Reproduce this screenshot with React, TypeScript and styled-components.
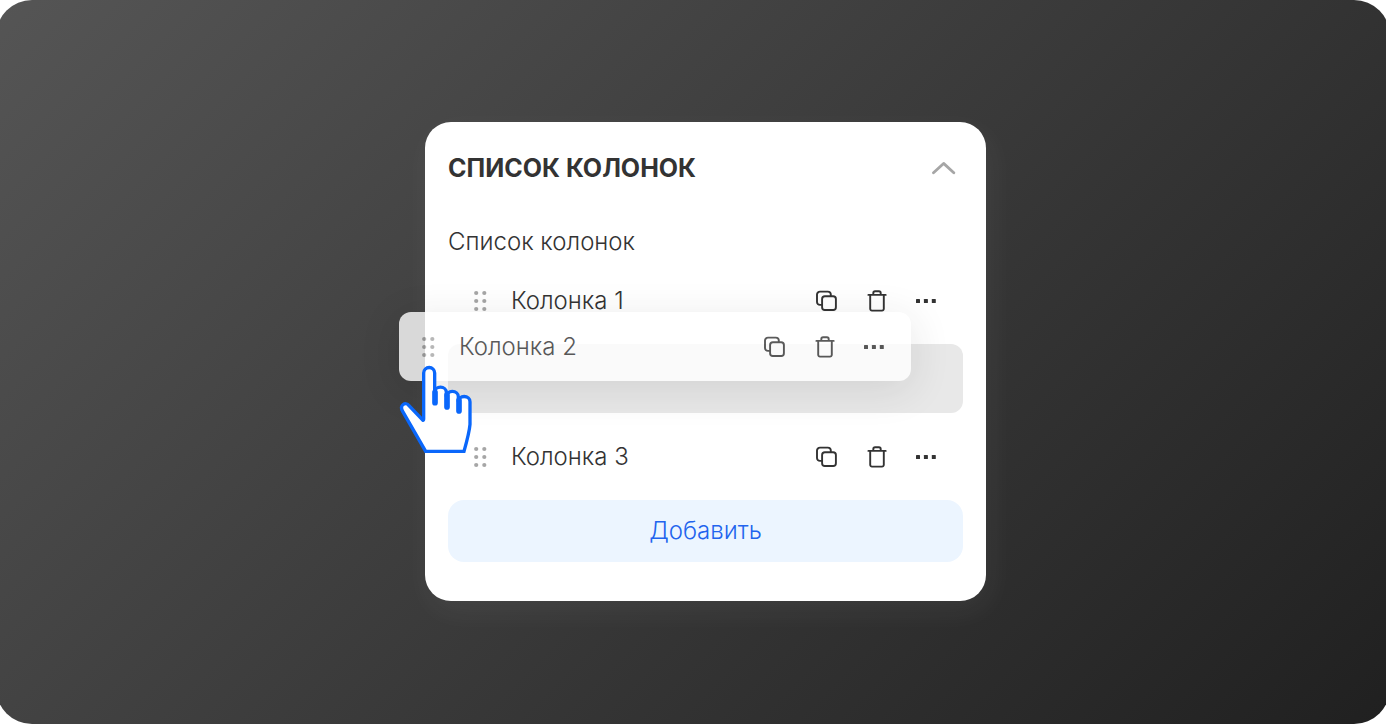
import React from "react";
import styled, { createGlobalStyle, css } from "styled-components";

const GlobalStyle = createGlobalStyle`
  *, *::before, *::after { box-sizing: border-box; }
  body {
    margin: 0;
    background: #fff;
    font-family: Inter, "Noto Sans", sans-serif;
    color: #333;
  }
  button { font: inherit; border: 0; padding: 0; background: none; cursor: pointer; }
`;

const Viewport = styled.main`
  overflow: hidden;
`;

const Stage = styled.div`
  display: flex;
  align-items: center;
  justify-content: center;
  min-height: 100vh;
  margin: 0 -4px;
  padding-bottom: 1px;
  border-radius: 36px;
  background: linear-gradient(135deg, #555 0%, #202020 100%);
`;

const Panel = styled.section`
  width: 100%;
  max-width: 561px;
  margin-left: 25px;
  padding: 0 23px 39px;
  border-radius: 26px;
  background: #fff;
  box-shadow: 4px 10px 30px rgba(255, 255, 255, 0.06);
`;

const Header = styled.header`
  display: flex;
  align-items: center;
  justify-content: space-between;
  height: 92px;
  padding-right: 7px;
`;

const Title = styled.h1`
  margin: 0;
  font-size: 25px;
  line-height: 32px;
  font-weight: 700;
  text-transform: uppercase;
`;

const Label = styled.h2`
  margin: 0;
  padding: 12px 0 8px;
  font-size: 24px;
  line-height: 32px;
  font-weight: 300;
`;

const List = styled.ul`
  display: flex;
  flex-direction: column;
  gap: 9px;
  margin: 0 0 9px;
  padding: 0;
  list-style: none;
`;

const Slot = styled.li<{ $empty?: boolean }>`
  position: relative;
  height: 69px;
  border-radius: 12px;
  ${(p) => p.$empty && css`background: #e8e8e8;`}
`;

const Row = styled.div<{ $dragged?: boolean }>`
  display: flex;
  align-items: center;
  height: 69px;
  padding: 0 25px 0 26px;
  border-radius: 12px;
  ${(p) =>
    p.$dragged &&
    css`
      padding-left: 23px;
      background: #fff;
      opacity: 0.8;
      box-shadow: 0 8px 40px rgba(0, 0, 0, 0.12);
    `}
`;

const Name = styled.span`
  flex: 1;
  padding-left: 24px;
  font-size: 24px;
  line-height: 32px;
  font-weight: 300;
`;

const Actions = styled.div`
  display: flex;
  gap: 28px;
`;

const IconButton = styled.button`
  display: flex;
  align-items: center;
  justify-content: center;
  color: #333;
`;

const HandleButton = styled(IconButton)`
  color: #a6a6a6;
  cursor: grab;
`;

const DragLayer = styled.div`
  position: absolute;
  z-index: 1;
  top: -32px;
  left: -49px;
  right: 52px;
`;

const Hand = styled.svg`
  position: absolute;
  top: 53px;
  left: 0;
`;

const AddButton = styled.button`
  && {
    display: block;
    width: 100%;
    height: 62px;
    border-radius: 16px;
    background: #ecf5ff;
    color: #2264ee;
    font-size: 24px;
    line-height: 32px;
    font-weight: 300;
  }
`;

const GripIcon = () => (
  <svg width="13" height="22" viewBox="0 0 13 22" fill="currentColor" aria-hidden="true">
    {[3, 11, 19].map((y) => (
      <React.Fragment key={y}>
        <circle cx="2.2" cy={y} r="2.1" />
        <circle cx="10.3" cy={y} r="2.1" />
      </React.Fragment>
    ))}
  </svg>
);

const CopyIcon = () => (
  <svg width="22" height="22" viewBox="0 0 22 22" fill="none" stroke="currentColor" strokeWidth="1.9" aria-hidden="true">
    <path d="M6 14.9H4a3 3 0 0 1-3-3V4.6a3 3 0 0 1 3-3h7.8a3 3 0 0 1 3 3V6" />
    <rect x="6.1" y="6.2" width="13.8" height="13.8" rx="2.8" />
  </svg>
);

const TrashIcon = () => (
  <svg width="22" height="22" viewBox="0 0 22 22" fill="none" stroke="currentColor" strokeWidth="1.9" strokeLinecap="round" aria-hidden="true">
    <path d="M2.4 4.9h17.3M7.3 4.6V3a1.8 1.8 0 0 1 1.8-1.8h3.8A1.8 1.8 0 0 1 14.7 3v1.6M4.2 5v13.8a1.8 1.8 0 0 0 1.8 1.8h10a1.8 1.8 0 0 0 1.8-1.8V5" />
  </svg>
);

const MoreIcon = () => (
  <svg width="22" height="22" viewBox="0 0 22 22" fill="currentColor" aria-hidden="true">
    <rect x="0" y="9" width="4" height="4" rx="0.6" />
    <rect x="7.9" y="9" width="4" height="4" rx="0.6" />
    <rect x="15.8" y="9" width="4" height="4" rx="0.6" />
  </svg>
);

const ChevronIcon = () => (
  <svg width="24" height="14" viewBox="0 0 24 14" fill="none" stroke="#a6a6a6" strokeWidth="2.8" strokeLinecap="round" strokeLinejoin="round" aria-hidden="true">
    <path d="M1.5 11.8 11.6 2.4l10.2 9.4" />
  </svg>
);

const HandCursor = () => (
  <Hand width="74" height="88" viewBox="27 30 222 264" aria-hidden="true">
    <path
      d="M107 289 38 169C27 150 47 139 57 152L98 195Q101 197 101 192V54a16.5 16.5 0 0 1 33 0V112a17 15 0 0 1 35 0V125a17 15 0 0 1 36 0V140a17 15 0 0 1 35 0V208Q238 232 222 289Z"
      fill="#fff"
      stroke="#0a67fb"
      strokeWidth="10"
    />
    <path d="M135 112V143M171 120V156M207 136V168" fill="none" stroke="#0a67fb" strokeWidth="17" strokeLinecap="round" />
  </Hand>
);

function ColumnRow({ name, dragged }: { name: string; dragged?: boolean }) {
  return (
    <Row $dragged={dragged}>
      <HandleButton aria-label="Переместить">
        <GripIcon />
      </HandleButton>
      <Name>{name}</Name>
      <Actions>
        <IconButton aria-label="Копировать">
          <CopyIcon />
        </IconButton>
        <IconButton aria-label="Удалить">
          <TrashIcon />
        </IconButton>
        <IconButton aria-label="Ещё">
          <MoreIcon />
        </IconButton>
      </Actions>
    </Row>
  );
}

export default function App() {
  return (
    <Viewport>
      <GlobalStyle />
      <Stage>
        <Panel>
          <Header>
            <Title>Список колонок</Title>
            <IconButton aria-label="Свернуть" aria-expanded="true">
              <ChevronIcon />
            </IconButton>
          </Header>
          <Label>Список колонок</Label>
          <List>
            <Slot>
              <ColumnRow name="Колонка 1" />
            </Slot>
            <Slot $empty>
              <DragLayer>
                <ColumnRow name="Колонка 2" dragged />
                <HandCursor />
              </DragLayer>
            </Slot>
            <Slot>
              <ColumnRow name="Колонка 3" />
            </Slot>
          </List>
          <AddButton>Добавить</AddButton>
        </Panel>
      </Stage>
    </Viewport>
  );
}
